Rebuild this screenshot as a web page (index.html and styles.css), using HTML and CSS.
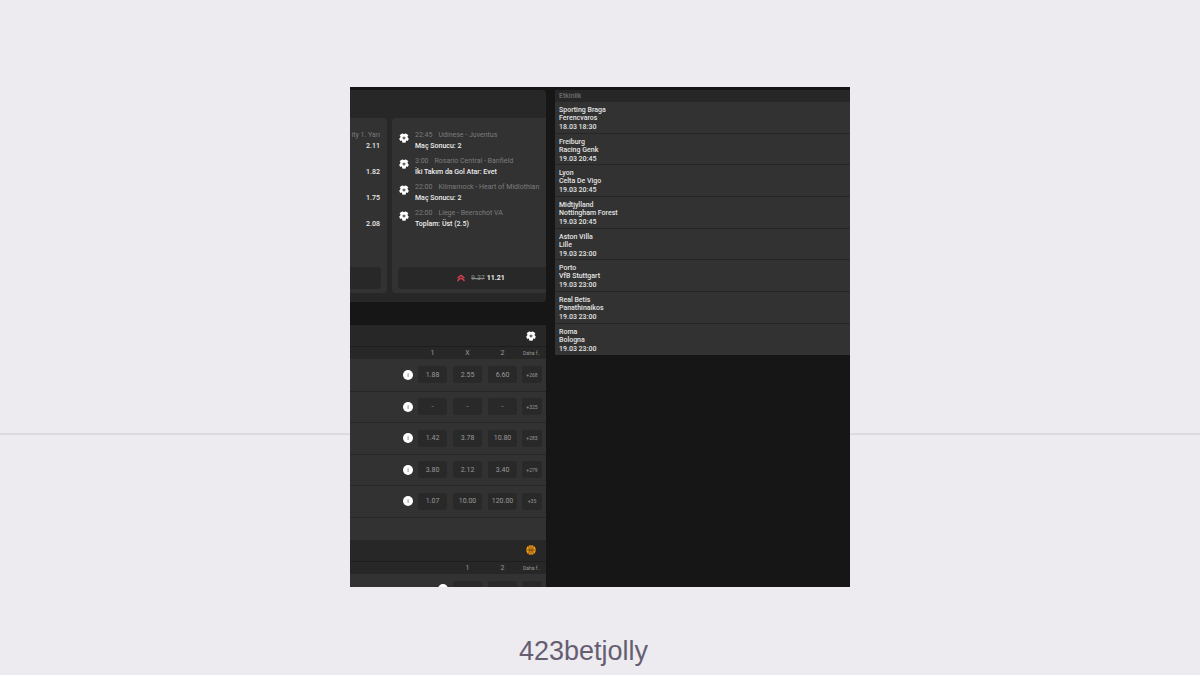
FILE: index.html
```html
<!DOCTYPE html>
<html lang="tr">
<head>
<meta charset="utf-8">
<title>423betjolly</title>
<meta name="viewport" content="width=device-width, initial-scale=1">
<link rel="stylesheet" href="styles.css">
</head>
<body>
<svg class="sprite" aria-hidden="true">
  <symbol id="football" viewBox="0 0 20 20">
    <circle cx="10" cy="10" r="9.6" fill="#ffffff"/>
    <path fill="#2b2b2b" d="M10 6.800l3.100 2.300-1.200 3.500H8.100L6.900 9.100zM7 0h6l-3 2.600zM0 5.800l3.600 1L1.200 10.600 0 10.600zM20 5.800l-3.600 1 2.400 3.800H20zM2 15.800l3.800-.6.8 4-4 .8zM18 15.800l-3.800-.6-.8 4 4 .8z"/>
    <circle cx="10" cy="10" r="1.400" fill="#d8d8d8"/>
  </symbol>
  <symbol id="basketball" viewBox="0 0 20 20">
    <circle cx="10" cy="10" r="9.600" fill="#f7a11a"/>
    <path fill="none" stroke="#5a3208" stroke-width="1.400" d="M10 .6v18.800M.6 10h18.800M5 2c2.200 4.500 2.200 11.500 0 16M15 2c-2.200 4.500-2.200 11.500 0 16"/>
  </symbol>
  <symbol id="boost" viewBox="0 0 20 20">
    <path fill="none" stroke="#d5404e" stroke-width="3.600" d="M1.500 10L10 3.500l8.500 6.500M1.500 18l3-4.500L10 10.500l5.500 3 3 4.500"/>
  </symbol>
</svg>
<main class="page">
  <section class="board">
    <div class="main-col">
      <section class="coupons">
        <div class="coupon-list">
          <article class="coupon coupon-prev">
            <ul class="picks">
              <li class="pick-end"><span class="match">ity 1. Yarı</span><b>2.11</b></li>
              <li class="pick-end"><b>1.82</b></li>
              <li class="pick-end"><b>1.75</b></li>
              <li class="pick-end"><b>2.08</b></li>
            </ul>
            <button class="total total-prev" type="button" aria-label="Kupon"></button>
          </article>
          <article class="coupon coupon-next">
            <ul class="picks">
              <li class="pick"><svg class="ball"><use href="#football"/></svg><div><span class="match"><time>22:45</time>Udinese - Juventus</span><b>Maç Sonucu: 2</b></div></li>
              <li class="pick"><svg class="ball"><use href="#football"/></svg><div><span class="match"><time>3:00</time>Rosario Central - Banfield</span><b>İki Takım da Gol Atar: Evet</b></div></li>
              <li class="pick"><svg class="ball"><use href="#football"/></svg><div><span class="match"><time>22:00</time>Kilmarnock - Heart of Midlothian</span><b>Maç Sonucu: 2</b></div></li>
              <li class="pick"><svg class="ball"><use href="#football"/></svg><div><span class="match"><time>22:00</time>Liege - Beerschot VA</span><b>Toplam: Üst (2.5)</b></div></li>
            </ul>
            <button class="total" type="button"><svg class="boost"><use href="#boost"/></svg><s>9.37</s><b>11.21</b></button>
          </article>
        </div>
      </section>

      <section class="sport">
        <header class="sport-head"><svg class="ball"><use href="#football"/></svg></header>
        <table class="odds">
          <colgroup><col><col class="c-info"><col class="c-odd"><col class="c-odd"><col class="c-odd"><col class="c-more"></colgroup>
          <thead><tr><th></th><th></th><th>1</th><th>X</th><th>2</th><th class="more-head">Daha f..</th></tr></thead>
          <tbody>
            <tr><td></td><td><button class="info" type="button">i</button></td><td><button class="odd" type="button">1.88</button></td><td><button class="odd" type="button">2.55</button></td><td><button class="odd" type="button">6.60</button></td><td><button class="odd more" type="button">+268</button></td></tr>
            <tr><td></td><td><button class="info" type="button">i</button></td><td><button class="odd" type="button">-</button></td><td><button class="odd" type="button">-</button></td><td><button class="odd" type="button">-</button></td><td><button class="odd more" type="button">+325</button></td></tr>
            <tr><td></td><td><button class="info" type="button">i</button></td><td><button class="odd" type="button">1.42</button></td><td><button class="odd" type="button">3.78</button></td><td><button class="odd" type="button">10.80</button></td><td><button class="odd more" type="button">+283</button></td></tr>
            <tr><td></td><td><button class="info" type="button">i</button></td><td><button class="odd" type="button">3.80</button></td><td><button class="odd" type="button">2.12</button></td><td><button class="odd" type="button">3.40</button></td><td><button class="odd more" type="button">+279</button></td></tr>
            <tr><td></td><td><button class="info" type="button">i</button></td><td><button class="odd" type="button">1.07</button></td><td><button class="odd" type="button">10.00</button></td><td><button class="odd" type="button">120.00</button></td><td><button class="odd more" type="button">+35</button></td></tr>
          </tbody>
        </table>
        <div class="sport-foot"></div>
      </section>

      <section class="sport">
        <header class="sport-head"><svg class="ball"><use href="#basketball"/></svg></header>
        <table class="odds">
          <colgroup><col><col class="c-info"><col class="c-odd"><col class="c-odd"><col class="c-more"></colgroup>
          <thead><tr><th></th><th></th><th>1</th><th>2</th><th class="more-head">Daha f..</th></tr></thead>
          <tbody>
            <tr><td></td><td><button class="info" type="button" aria-label="Bilgi"></button></td><td><button class="odd" type="button" aria-label="1"></button></td><td><button class="odd" type="button" aria-label="2"></button></td><td><button class="odd more" type="button" aria-label="Daha fazla"></button></td></tr>
          </tbody>
        </table>
      </section>
    </div>

    <aside class="events">
      <h2>Etkinlik</h2>
      <ul>
        <li><span>Sporting Braga</span><span>Ferencvaros</span><time>18.03 18:30</time></li>
        <li><span>Freiburg</span><span>Racing Genk</span><time>19.03 20:45</time></li>
        <li><span>Lyon</span><span>Celta De Vigo</span><time>19.03 20:45</time></li>
        <li><span>Midtjylland</span><span>Nottingham Forest</span><time>19.03 20:45</time></li>
        <li><span>Aston Villa</span><span>Lille</span><time>19.03 23:00</time></li>
        <li><span>Porto</span><span>VfB Stuttgart</span><time>19.03 23:00</time></li>
        <li><span>Real Betis</span><span>Panathinaikos</span><time>19.03 23:00</time></li>
        <li><span>Roma</span><span>Bologna</span><time>19.03 23:00</time></li>
      </ul>
    </aside>
  </section>
  <h1 class="caption">423betjolly</h1>
</main>
</body>
</html>
```
FILE: styles.css
```css
* { box-sizing: border-box; }

body {
  margin: 0;
  background: #edeaf0;
  font-family: Roboto, "Noto Sans", sans-serif;
  font-size: 7px;
  line-height: 8px;
}

ul { margin: 0; padding: 0; list-style: none; }

button {
  margin: 0;
  padding: 0;
  border: 0;
  font: inherit;
  cursor: pointer;
}

.sprite { position: absolute; width: 0; height: 0; }

.page {
  position: relative;
  display: flex;
  flex-direction: column;
  align-items: center;
  padding-top: 87px;
}

/* Rule that runs behind the board */
.page::before {
  content: "";
  position: absolute;
  top: 433px;
  left: 0;
  right: 0;
  height: 2px;
  background: #dcd9e0;
}

.board {
  position: relative;
  display: grid;
  grid-template-columns: 196fr 295fr;
  align-items: start;
  gap: 9px;
  width: min(500px, 100%);
  aspect-ratio: 1;
  padding-top: 3px;
  overflow: hidden;
  background: #161616;
}

.main-col { min-width: 0; height: 497px; overflow: hidden; }

/* Coupons */
.coupons {
  margin-bottom: 23px;
  padding: 28px 0 9px;
  background: #272727;
  border-radius: 0 4px 4px 0;
}

.coupon-list { display: grid; grid-template-columns: 37px 1fr; gap: 5px; }

.coupon {
  display: flex;
  flex-direction: column;
  min-width: 0;
  height: 175px;
  padding: 13px 0 4px;
  overflow: hidden;
  background: #323232;
}

.coupon-prev { border-radius: 0 4px 4px 0; }
.coupon-next { padding-left: 6px; border-radius: 4px 0 0 4px; }

.picks { display: grid; grid-auto-rows: 26px; }

.pick { display: flex; gap: 6px; padding-left: 1px; }
.pick .ball { margin-top: 2px; }

.match, .picks b { display: block; white-space: nowrap; }
.match { height: 11px; color: #7c7c7c; }
.match time { margin-right: 6px; }
.picks b { color: #ededed; font-weight: 500; }

.pick-end {
  display: flex;
  flex-direction: column;
  align-items: flex-end;
  justify-content: flex-start;
  padding-right: 7px;
}
.pick-end b:only-child { margin-top: 11px; }

.ball { flex: none; width: 10px; height: 10px; }

.total {
  display: flex;
  align-items: center;
  justify-content: center;
  gap: 2px;
  height: 22px;
  margin-top: auto;
  padding-left: 18px;
  background: #282828;
  border-radius: 4px 0 0 4px;
  color: #8a8a8a;
}
.total b { color: #ededed; font-weight: 700; }
.total-prev { margin-right: 6px; border-radius: 0 4px 4px 0; }
.boost { width: 8px; height: 8px; margin-right: 4px; }

/* Odds */
.sport-head {
  display: flex;
  align-items: center;
  justify-content: flex-end;
  height: 22px;
  padding-right: 10px;
  background: #272727;
  border-bottom: 1px solid #1e1e1e;
}

.sport-foot { height: 22px; background: #323232; }

.odds {
  width: 100%;
  table-layout: fixed;
  border-collapse: collapse;
  background: #323232;
}
.c-info { width: 16px; }
.c-odd { width: 35px; }
.c-more { width: 26px; }

.odds th {
  height: 12px;
  padding: 0;
  background: #272727;
  color: #999999;
  font-weight: 400;
}
.odds .more-head { padding-right: 3px; font-size: 5px; white-space: nowrap; }

.odds tbody tr { height: 32px; }
.odds tbody tr:nth-child(even) { height: 31px; }

.odds td {
  padding: 0 3px;
  border-bottom: 1px solid #272727;
  vertical-align: middle;
}
.odds td:nth-child(2) { padding: 0 0 0 4px; }
.odds td:last-child { padding: 0 4px 0 2px; }

.odd {
  display: block;
  width: 100%;
  height: 17px;
  background: #292929;
  border-radius: 3px;
  color: #9a9a9a;
}
.more { font-size: 5px; }

.info {
  display: block;
  width: 10px;
  height: 10px;
  background: #ffffff;
  border-radius: 50%;
  color: #888888;
  font-size: 6px;
  font-weight: 700;
}

/* Upcoming events */
.events { background: #323232; color: #e4e4e4; font-weight: 500; }

.events h2 {
  margin: 0;
  padding: 2px 4px;
  background: #272727;
  color: #808080;
  font-size: 7px;
  font-weight: 400;
  line-height: 8px;
}

.events li {
  height: 32px;
  padding: 4px 4px 0;
  border-bottom: 1px solid #262626;
}
.events li:nth-child(3n + 2) { height: 31px; }
.events li:last-child { border-bottom: 0; }
.events span, .events time { display: block; }
.events time { margin-top: 1px; }

.caption {
  margin: 49px 33px 0 0;
  color: #655e70;
  font: 400 27px/31px "Liberation Sans", Arial, sans-serif;
}
```
